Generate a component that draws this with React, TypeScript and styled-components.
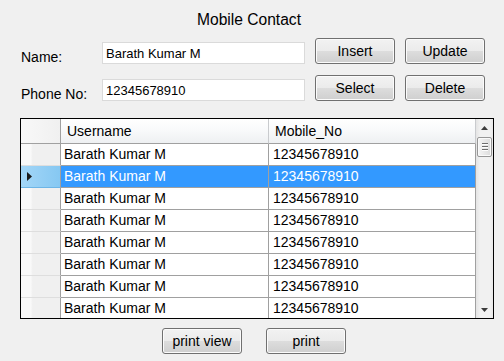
import React from "react";
import styled, { createGlobalStyle } from "styled-components";

const GlobalStyle = createGlobalStyle`
  html, body {
    margin: 0;
    padding: 0;
    background: #f0f0f0;
  }
  body {
    font-family: "Liberation Sans", Arial, sans-serif;
    color: #000;
  }
`;

const rows = Array.from({ length: 8 }, () => ({
  username: "Barath Kumar M",
  mobile: "12345678910",
}));

const SELECTED = 1;

const Window = styled.div`
  width: 504px;
  height: 361px;
  overflow: hidden;
  display: flex;
  flex-direction: column;
`;

const Title = styled.div`
  margin-top: 11px;
  height: 18px;
  line-height: 18px;
  font-size: 15.6px;
  text-align: center;
  padding-right: 6px;
`;

const Fields = styled.div`
  margin-top: 9px;
  padding-left: 21px;
  display: grid;
  grid-template-columns: 71px 203px 80px 80px;
  grid-auto-rows: 26px;
  column-gap: 10px;
  row-gap: 11px;
`;

const Label = styled.div`
  padding-top: 11px;
  font-size: 14px;
  line-height: 16px;
  white-space: nowrap;
`;

const TextBox = styled.input`
  margin-top: 4px;
  height: 22px;
  box-sizing: border-box;
  border: 1px solid #dadada;
  padding: 0 3px;
  font-family: inherit;
  font-size: 13px;
  color: #000;
  background: #fff;
  outline: none;
`;

const Button = styled.button`
  width: 80px;
  height: 26px;
  box-sizing: border-box;
  padding: 0;
  border: 1px solid #707070;
  border-radius: 3px;
  background: linear-gradient(#f2f2f2 0%, #ebebeb 50%, #dddddd 50%, #cfcfcf 100%);
  box-shadow: inset 0 0 0 1px #fbfbfb;
  font-family: inherit;
  font-size: 14px;
  color: #000;
`;

const Grid = styled.div`
  margin: 17px 0 0 20px;
  width: 474px;
  height: 201px;
  box-sizing: border-box;
  border: 1px solid #000;
  display: flex;
  background: #fff;
`;

const Table = styled.div`
  width: 455px;
  display: flex;
  flex-direction: column;
  overflow: hidden;
`;

const HeaderRow = styled.div`
  display: grid;
  grid-template-columns: 40px 208px 207px;
  height: 25px;
  flex-shrink: 0;
`;

const HeaderCell = styled.div<{ $pad?: number }>`
  box-sizing: border-box;
  border-right: 1px solid #c9cbce;
  border-bottom: 1px solid #a0a0a0;
  background: linear-gradient(#ffffff 0%, #f9fafb 45%, #eef0f2 100%);
  padding-left: ${(p) => p.$pad ?? 6}px;
  font-size: 14px;
  line-height: 24px;
  white-space: nowrap;
`;

const Corner = styled(HeaderCell)`
  background: linear-gradient(to right, #f8f8f8, #f0f0f0);
  border-right-color: #a0a0a0;
`;

const Row = styled.div`
  display: grid;
  grid-template-columns: 40px 208px 207px;
  height: 22px;
  flex-shrink: 0;
`;

const RowHeader = styled.div<{ $selected?: boolean }>`
  box-sizing: border-box;
  border-right: 1px solid #a0a0a0;
  border-bottom: 1px solid ${(p) => (p.$selected ? "#6db5e6" : "#dedede")};
  background: ${(p) =>
    p.$selected
      ? "linear-gradient(to right, #a3d6f7, #86c8f2)"
      : "linear-gradient(to right, #f9f9f9 0%, #f9f9f9 25%, #f0f0f0 30%, #f0f0f0 100%)"};
  display: flex;
  align-items: center;
  padding-left: 6px;
`;

const Cell = styled.div<{ $selected?: boolean; $pad?: number }>`
  box-sizing: border-box;
  border-right: 1px solid #a0a0a0;
  border-bottom: 1px solid #a0a0a0;
  padding-left: ${(p) => p.$pad ?? 3}px;
  font-size: 14px;
  line-height: 21px;
  white-space: nowrap;
  background: ${(p) => (p.$selected ? "#3399ff" : "#fff")};
  color: ${(p) => (p.$selected ? "#fff" : "#000")};
`;

const ScrollBar = styled.div`
  width: 17px;
  display: flex;
  flex-direction: column;
  background: linear-gradient(to right, #e4e4e4 0%, #f1f1f1 25%, #f1f1f1 80%, #e8e8e8 100%);
`;

const ArrowButton = styled.div`
  height: 17px;
  flex-shrink: 0;
  display: flex;
  align-items: center;
  justify-content: center;
`;

const Track = styled.div`
  flex: 1;
`;

const Thumb = styled.div`
  margin: 1px 0 0 1px;
  width: 15px;
  height: 20px;
  box-sizing: border-box;
  border: 1px solid #979797;
  border-radius: 2px;
  background: linear-gradient(to right, #f6f6f6, #e8e8e8 50%, #dcdcdc);
  box-shadow: inset 0 0 0 1px #fafafa;
  display: flex;
  flex-direction: column;
  align-items: center;
  justify-content: center;
  gap: 1px;
`;

const Grip = styled.div`
  width: 6px;
  height: 1px;
  background: #6d6d6d;
  border-bottom: 1px solid #fdfdfd;
`;

const Footer = styled.div`
  margin-top: 9px;
  padding-left: 4px;
  display: flex;
  justify-content: center;
  gap: 24px;
`;

const Arrow = ({ up }: { up?: boolean }) => (
  <svg width="7" height="4" viewBox="0 0 7 4">
    <polygon points={up ? "0,4 7,4 3.5,0" : "0,0 7,0 3.5,4"} fill="#3c3c3c" />
  </svg>
);

const Pointer = () => (
  <svg width="5" height="9" viewBox="0 0 5 9">
    <polygon points="0,0 5,4.5 0,9" fill="#1a1a1a" />
  </svg>
);

export default function App() {
  return (
    <>
      <GlobalStyle />
      <Window>
        <Title>Mobile Contact</Title>
        <Fields>
          <Label>Name:</Label>
          <TextBox defaultValue="Barath Kumar M" />
          <Button>Insert</Button>
          <Button>Update</Button>
          <Label>Phone No:</Label>
          <TextBox defaultValue="12345678910" />
          <Button>Select</Button>
          <Button>Delete</Button>
        </Fields>
        <Grid>
          <Table>
            <HeaderRow>
              <Corner />
              <HeaderCell>Username</HeaderCell>
              <HeaderCell $pad={6}>Mobile_No</HeaderCell>
            </HeaderRow>
            {rows.map((r, i) => (
              <Row key={i}>
                <RowHeader $selected={i === SELECTED}>
                  {i === SELECTED && <Pointer />}
                </RowHeader>
                <Cell $selected={i === SELECTED}>{r.username}</Cell>
                <Cell $selected={i === SELECTED} $pad={4}>
                  {r.mobile}
                </Cell>
              </Row>
            ))}
          </Table>
          <ScrollBar>
            <ArrowButton>
              <Arrow up />
            </ArrowButton>
            <Track>
              <Thumb>
                <Grip />
                <Grip />
                <Grip />
              </Thumb>
            </Track>
            <ArrowButton>
              <Arrow />
            </ArrowButton>
          </ScrollBar>
        </Grid>
        <Footer>
          <Button>print view</Button>
          <Button>print</Button>
        </Footer>
      </Window>
    </>
  );
}
